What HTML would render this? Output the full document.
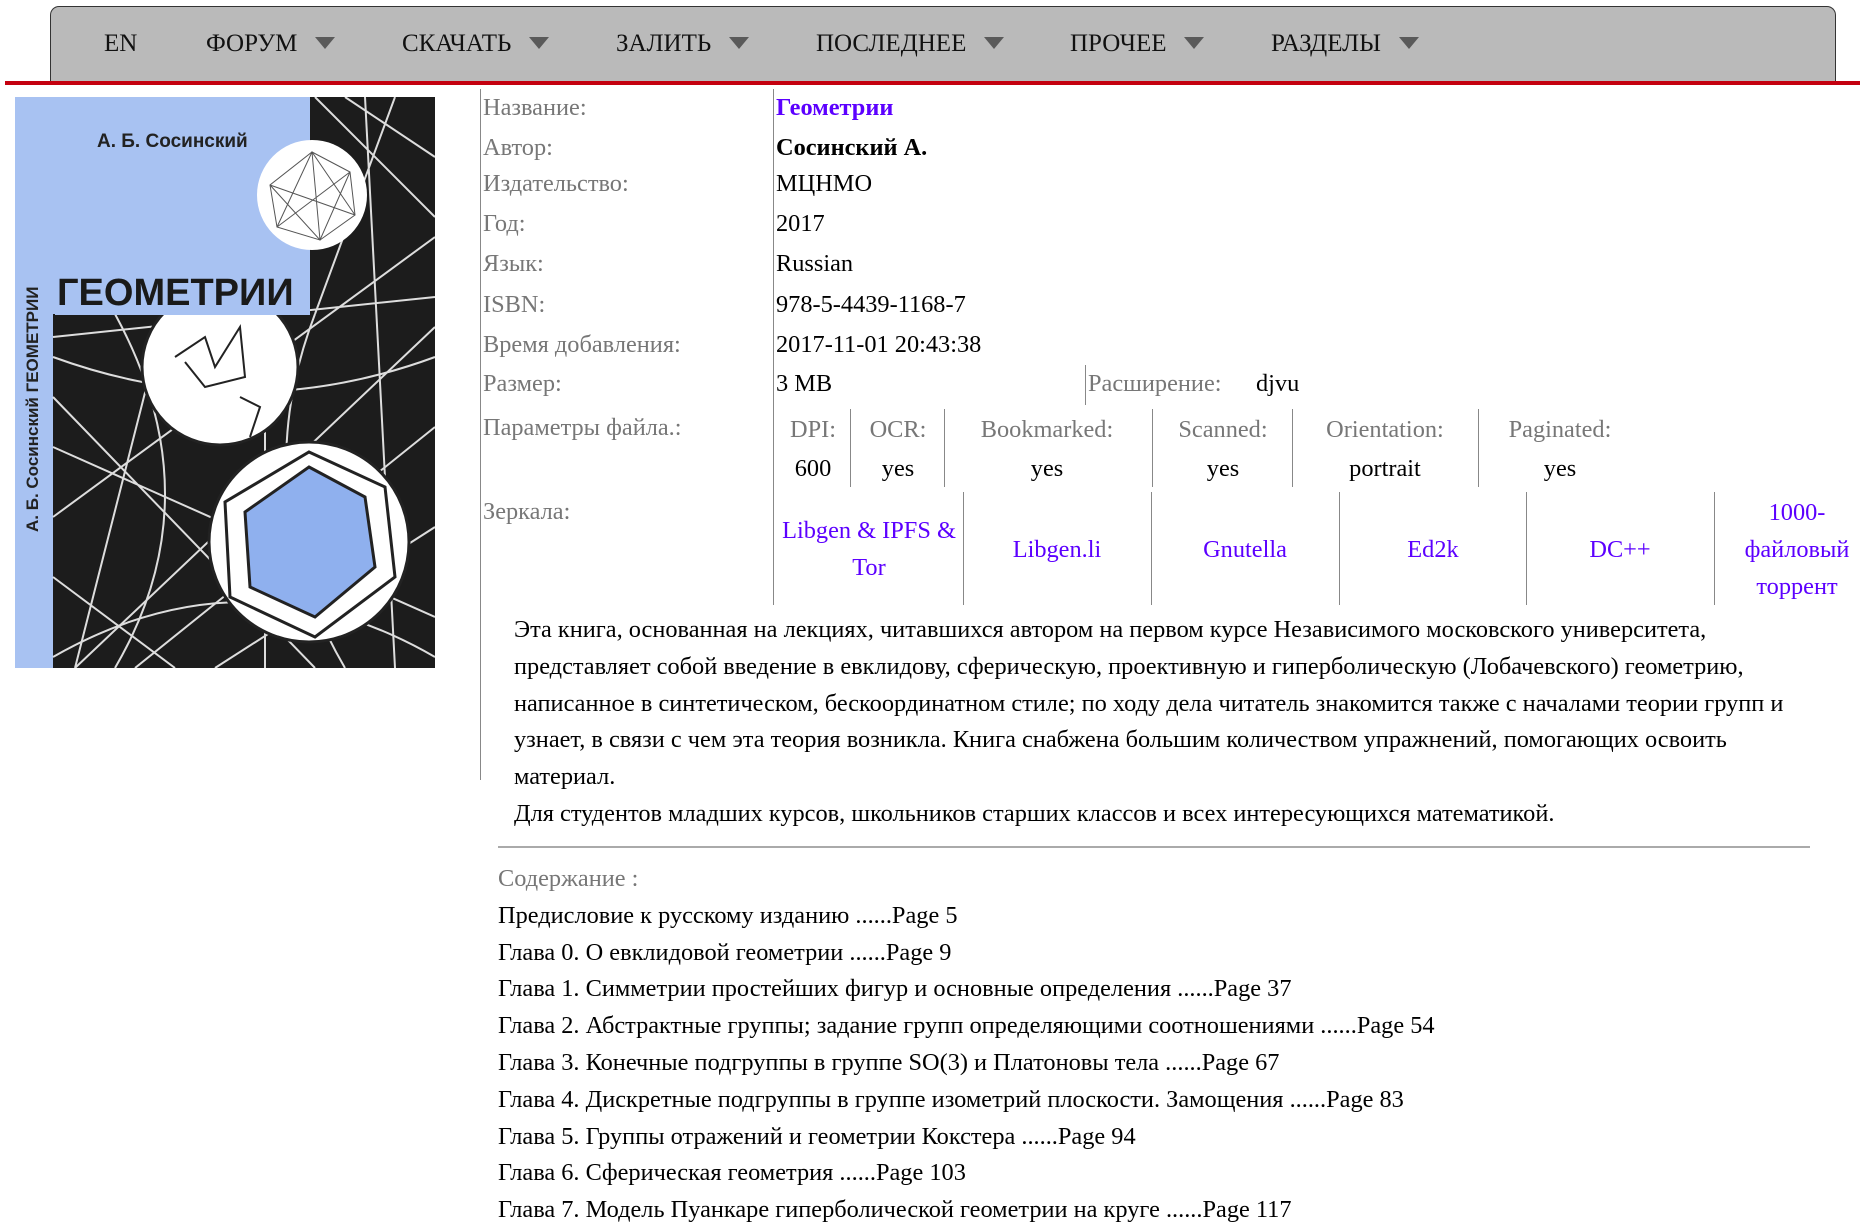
<!DOCTYPE html>
<html><head><meta charset="utf-8"><style>
*{margin:0;padding:0;box-sizing:border-box}
body{width:1860px;height:1232px;background:#fff;font-family:"Liberation Serif",serif;font-size:24.35px;color:#000;position:relative;overflow:hidden}
.a{position:absolute;white-space:nowrap;line-height:30px}
.nav{position:absolute;left:50px;top:6px;width:1786px;height:77px;background:#bababa;border:1.5px solid #333;border-bottom:none;border-radius:9px 9px 0 0}
.red{position:absolute;left:5px;top:81px;width:1855px;height:4px;background:#c4000f}
.ni{position:absolute;top:29px;font-size:25px;color:#111;line-height:30px}
.tri{display:inline-block;width:0;height:0;border-left:10px solid transparent;border-right:10px solid transparent;border-top:12px solid #5a5a5a;margin-left:18px;vertical-align:2px}
.l{color:#777}
.lk{color:#5c00ff}
.vl{position:absolute;width:1px;background:#888}
.c{position:absolute;text-align:center;line-height:37px;white-space:nowrap}
</style></head><body>
<div class="nav"></div>
<div class="red"></div>
<div class="ni" style="left:104px">EN</div>
<div class="ni" style="left:206px">ФОРУМ<span class="tri"></span></div>
<div class="ni" style="left:402px">СКАЧАТЬ<span class="tri"></span></div>
<div class="ni" style="left:616px">ЗАЛИТЬ<span class="tri"></span></div>
<div class="ni" style="left:816px">ПОСЛЕДНЕЕ<span class="tri"></span></div>
<div class="ni" style="left:1070px">ПРОЧЕЕ<span class="tri"></span></div>
<div class="ni" style="left:1271px">РАЗДЕЛЫ<span class="tri"></span></div>

<svg style="position:absolute;left:15px;top:97px" width="420" height="571" viewBox="0 0 420 571">
<rect width="420" height="571" fill="#1c1c1c"/>
<rect width="295" height="217" fill="#a8c2f2"/>
<rect width="38" height="571" fill="#a8c2f2"/>
<g stroke="#fff" stroke-width="2" fill="none" opacity=".85">
<path d="M60 571L420 230M120 571L420 330M200 571L420 430M38 420L420 140M38 300L300 571M38 480L160 571M300 0L420 120M330 0L420 60M380 0L300 217M420 200L38 240M150 217L60 571M250 217L250 571M350 0L380 571M420 520L38 350"/>
<path d="M38 260Q230 330 420 260M38 560Q230 450 420 560M100 217Q200 400 100 571M300 217Q230 400 330 571"/>
</g>
<circle cx="297" cy="98" r="55" fill="#fff"/>
<g stroke="#555" stroke-width="1" fill="none"><polygon points="297,55 335,75 340,118 305,143 262,130 255,88"/><path d="M297 55L305 143M335 75L262 130M340 118L255 88M262 130L297 55L340 118M255 88L305 143L335 75"/></g>
<circle cx="205" cy="270" r="78" fill="#fff" stroke="#222" stroke-width="3"/>
<path d="M160 260l30-20 10 30 25-40 5 50-40 10-20-25M225 300l20 10-10 30" stroke="#222" stroke-width="2" fill="none"/>
<circle cx="294" cy="445" r="100" fill="#fff" stroke="#222" stroke-width="3"/>
<polygon points="294,370 350,400 360,470 300,520 235,490 230,415" fill="#8fb0ee" stroke="#222" stroke-width="3"/>
<polygon points="294,355 370,390 380,480 300,540 215,500 210,405" fill="none" stroke="#222" stroke-width="3"/>
<rect x="40" y="168" width="255" height="50" fill="#a8c2f2"/>
<text x="42" y="208" font-family="Liberation Sans,sans-serif" font-weight="bold" font-size="38" fill="#1a1a1a">ГЕОМЕТРИИ</text>
<text x="82" y="50" font-family="Liberation Sans,sans-serif" font-weight="bold" font-size="19" fill="#222">А. Б. Сосинский</text>
<text transform="translate(23,435) rotate(-90)" font-family="Liberation Sans,sans-serif" font-weight="bold" font-size="17" fill="#222">А. Б. Сосинский    ГЕОМЕТРИИ</text>
</svg>

<div class="vl" style="left:480px;top:89px;height:691px"></div>
<div class="vl" style="left:773px;top:89px;height:516px"></div>

<div class="a l" style="left:483px;top:93px">Название:</div><div class="a lk" style="left:776px;top:93px;font-weight:bold">Геометрии</div>
<div class="a l" style="left:483px;top:133px">Автор:</div><div class="a" style="left:776px;top:133px;font-weight:bold">Сосинский А.</div>
<div class="a l" style="left:483px;top:169px">Издательство:</div><div class="a" style="left:776px;top:169px">МЦНМО</div>
<div class="a l" style="left:483px;top:209px">Год:</div><div class="a" style="left:776px;top:209px">2017</div>
<div class="a l" style="left:483px;top:249px">Язык:</div><div class="a" style="left:776px;top:249px">Russian</div>
<div class="a l" style="left:483px;top:290px">ISBN:</div><div class="a" style="left:776px;top:290px">978-5-4439-1168-7</div>
<div class="a l" style="left:483px;top:330px">Время добавления:</div><div class="a" style="left:776px;top:330px">2017-11-01 20:43:38</div>
<div class="a l" style="left:483px;top:369px">Размер:</div><div class="a" style="left:776px;top:369px">3 MB</div>
<div class="vl" style="left:1085px;top:365px;height:40px"></div>
<div class="a l" style="left:1088px;top:369px">Расширение:</div><div class="a" style="left:1256px;top:369px">djvu</div>
<div class="a l" style="left:483px;top:413px">Параметры файла.:</div>

<div class="vl" style="left:850px;top:409px;height:78px"></div>
<div class="vl" style="left:944px;top:409px;height:78px"></div>
<div class="vl" style="left:1152px;top:409px;height:78px"></div>
<div class="vl" style="left:1292px;top:409px;height:78px"></div>
<div class="vl" style="left:1478px;top:409px;height:78px"></div>
<div class="c l" style="left:763px;width:100px;top:411px">DPI:</div><div class="c" style="left:763px;width:100px;top:450px">600</div>
<div class="c l" style="left:848px;width:100px;top:411px">OCR:</div><div class="c" style="left:848px;width:100px;top:450px">yes</div>
<div class="c l" style="left:947px;width:200px;top:411px">Bookmarked:</div><div class="c" style="left:947px;width:200px;top:450px">yes</div>
<div class="c l" style="left:1123px;width:200px;top:411px">Scanned:</div><div class="c" style="left:1123px;width:200px;top:450px">yes</div>
<div class="c l" style="left:1285px;width:200px;top:411px">Orientation:</div><div class="c" style="left:1285px;width:200px;top:450px">portrait</div>
<div class="c l" style="left:1460px;width:200px;top:411px">Paginated:</div><div class="c" style="left:1460px;width:200px;top:450px">yes</div>

<div class="a l" style="left:483px;top:497px">Зеркала:</div>
<div class="vl" style="left:963px;top:492px;height:113px"></div>
<div class="vl" style="left:1151px;top:492px;height:113px"></div>
<div class="vl" style="left:1339px;top:492px;height:113px"></div>
<div class="vl" style="left:1526px;top:492px;height:113px"></div>
<div class="vl" style="left:1714px;top:492px;height:113px"></div>
<div class="c lk" style="left:775px;width:188px;top:512px">Libgen &amp; IPFS &amp;<br>Tor</div>
<div class="c lk" style="left:963px;width:188px;top:531px">Libgen.li</div>
<div class="c lk" style="left:1151px;width:188px;top:531px">Gnutella</div>
<div class="c lk" style="left:1339px;width:188px;top:531px">Ed2k</div>
<div class="c lk" style="left:1526px;width:188px;top:531px">DC++</div>
<div class="c lk" style="left:1714px;width:166px;top:494px">1000-<br>файловый<br>торрент</div>

<div style="position:absolute;left:514px;top:612px;width:1320px;line-height:36.8px">Эта книга, основанная на лекциях, читавшихся автором на первом курсе Независимого московского университета,<br>представляет собой введение в евклидову, сферическую, проективную и гиперболическую (Лобачевского) геометрию,<br>написанное в синтетическом, бескоординатном стиле; по ходу дела читатель знакомится также с началами теории групп и<br>узнает, в связи с чем эта теория возникла. Книга снабжена большим количеством упражнений, помогающих освоить<br>материал.<br>Для студентов младших курсов, школьников старших классов и всех интересующихся математикой.</div>
<div style="position:absolute;left:498px;top:846px;width:1312px;height:2px;background:#aaa"></div>
<div style="position:absolute;left:498px;top:861px;line-height:36.8px;white-space:nowrap"><span class="l">Содержание :</span><br>Предисловие к русскому изданию ......Page 5<br>Глава 0. О евклидовой геометрии ......Page 9<br>Глава 1. Симметрии простейших фигур и основные определения ......Page 37<br>Глава 2. Абстрактные группы; задание групп определяющими соотношениями ......Page 54<br>Глава 3. Конечные подгруппы в группе SO(3) и Платоновы тела ......Page 67<br>Глава 4. Дискретные подгруппы в группе изометрий плоскости. Замощения ......Page 83<br>Глава 5. Группы отражений и геометрии Кокстера ......Page 94<br>Глава 6. Сферическая геометрия ......Page 103<br>Глава 7. Модель Пуанкаре гиперболической геометрии на круге ......Page 117</div>
</body></html>
